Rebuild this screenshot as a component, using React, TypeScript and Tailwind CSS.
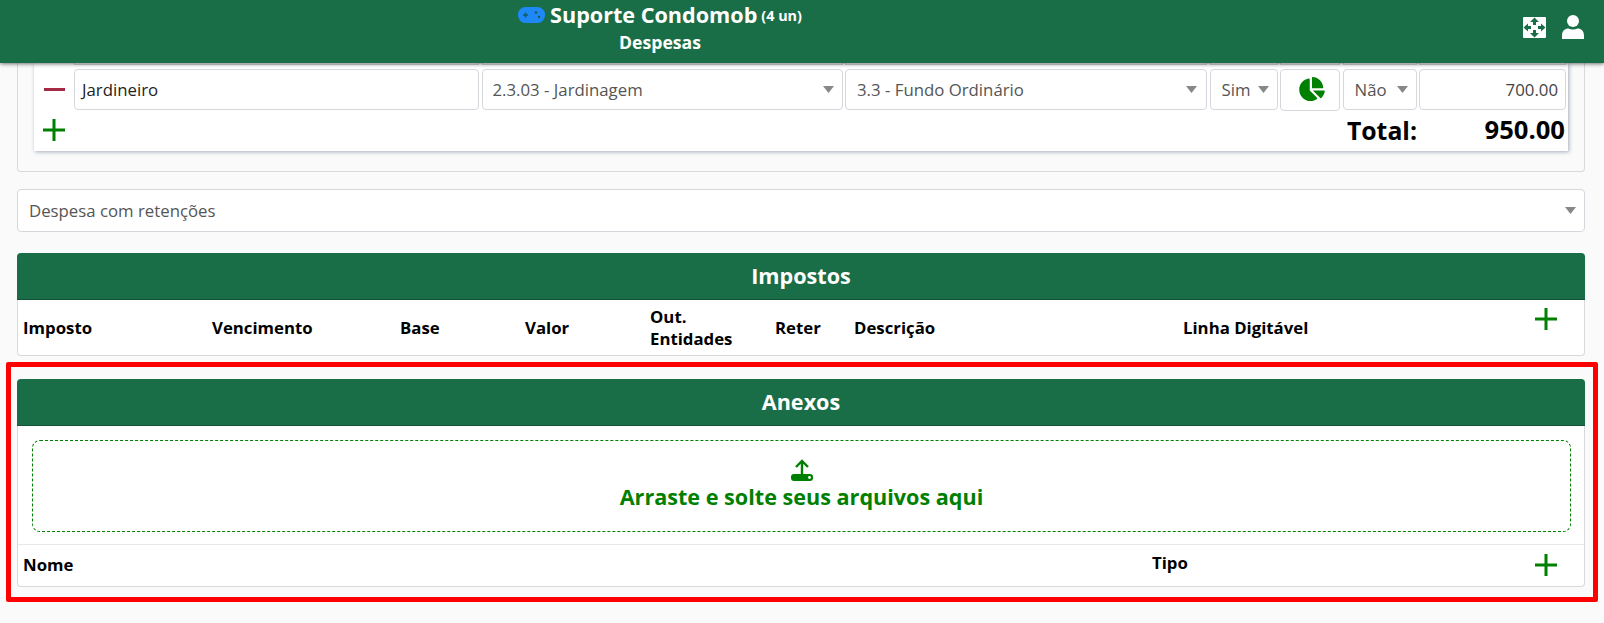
import { FaChartPie } from "react-icons/fa";

const rowGrid = "grid grid-cols-[405px_361px_362px_68px_60px_74px_147px] gap-x-[2.5px]";

function Caret({ className = "" }: { className?: string }) {
    return (
        <svg viewBox="0 0 11 7" className={`h-[7px] w-[11px] shrink-0 fill-[#888888] ${className}`}>
            <path d="M0 0h11L5.5 7z" />
        </svg>
    );
}

function Plus({ className = "" }: { className?: string }) {
    return (
        <svg viewBox="0 0 22 22" className={`h-[22px] w-[22px] ${className}`}>
            <path d="M0 11h22M11 0v22" stroke="#008000" strokeWidth="3" fill="none" />
        </svg>
    );
}

function Select({ label, className = "" }: { label: string; className?: string }) {
    return (
        <div className={`flex h-[41px] items-center justify-between rounded border border-[#d5d7dc] bg-white text-[#555] ${className}`}>
            <span>{label}</span>
            <Caret />
        </div>
    );
}

function SectionTitle({ title }: { title: string }) {
    return (
        <div className="-mx-px flex h-[47px] items-center justify-center rounded-t border-b border-[#125236] bg-[#1a6e47] pt-[1px] text-[21.6px] font-bold text-white">
            {title}
        </div>
    );
}

function Gamepad() {
    return (
        <svg viewBox="0 0 27 16" className="mr-[5px] h-[16px] w-[27px]">
            <rect width="27" height="16" rx="7.5" fill="#1e88f7" />
            <path d="M7.5 5.5v5M5 8h5" stroke="#1a5c5a" strokeWidth="1.6" />
            <circle cx="18" cy="5.5" r="1.3" fill="#1a5c5a" />
            <circle cx="21" cy="10" r="1.3" fill="#1a5c5a" />
        </svg>
    );
}

function ExpandIcon() {
    return (
        <svg viewBox="0 0 23 21" className="h-[21px] w-[23px]">
            <rect width="23" height="21" rx="1" fill="#fff" />
            <path d="M11.5 0.500l4.500 4.500h-3v3h-3V5h-3zM11.5 20.500l4.500-4.500h-3v-3h-3v3h-3zM0.500 10.500L5 6.500v2.500h3v3H5v2.500zM22.500 10.500L18 6.500v2.500h-3v3h3v2.500z" fill="#1a6e47" />
        </svg>
    );
}

function UserIcon() {
    return (
        <svg viewBox="0 0 22 24" className="h-[24px] w-[22px] fill-white">
            <circle cx="11" cy="6" r="6" />
            <path d="M0 24v-3.5C0 16 3 13.5 6.5 13.5c1.3.7 2.8 1 4.500 1s3.200-.3 4.500-1C19 13.500 22 16 22 20.500V24z" />
        </svg>
    );
}

function UploadIcon() {
    return (
        <svg viewBox="0 0 22 22" className="h-[22px] w-[22px]">
            <path d="M11 15V2M5 8l6-6 6 6" stroke="#008000" strokeWidth="2.4" fill="none" />
            <rect x="0" y="15" width="22" height="7" rx="3" fill="#008000" />
            <circle cx="18.500" cy="18.500" r="1.400" fill="#fff" />
        </svg>
    );
}

export default function App() {
    return (
        <div className="relative h-[623px] overflow-hidden bg-[#fafafa] font-['Open_Sans',sans-serif] text-[16.8px] text-black">
            <header className="relative z-10 flex h-[63px] bg-[#1a6e47] text-white shadow-[0_1px_4px_rgba(0,0,0,0.55)]">
                <div className="flex w-[1320px] flex-col items-center pt-[1px]">
                    <div className="flex h-[28px] items-center">
                        <Gamepad />
                        <span className="text-[21.6px] font-bold">Suporte Condomob</span>
                        <span className="ml-[4px] mt-[2px] text-[14.4px] font-bold">(4 un)</span>
                    </div>
                    <div className="text-[17.6px] font-bold">Despesas</div>
                </div>
                <div className="flex flex-1 items-center pb-[9px] pl-[203px]">
                    <ExpandIcon />
                    <span className="ml-[16px]"><UserIcon /></span>
                </div>
            </header>

            <main className="ml-[17px] w-[1568px]">
                <div className="h-[109px] rounded-b border border-t-0 border-[#d8d9dd]">
                    <div className="ml-[16px] h-[88px] w-[1534px] bg-white shadow-[1px_1px_4px_rgba(60,80,110,0.45)]">
                        <div className={`${rowGrid} h-[2px] pl-[40px]`}>
                            <div className="border-x border-b border-[#d5d7dc]" />
                            <div className="border-x border-b border-[#d5d7dc]" />
                            <div className="border-x border-b border-[#d5d7dc]" />
                            <div className="border-x border-b border-[#d5d7dc]" />
                            <div className="border-x border-b border-[#d5d7dc]" />
                            <div className="border-x border-b border-[#d5d7dc]" />
                            <div className="border-x border-b border-[#d5d7dc]" />
                        </div>
                        <div className={`${rowGrid} mt-[4px] pl-[40px]`}>
                            <div className="relative flex h-[41px] items-center rounded border border-[#d5d7dc] bg-white pl-[7px] text-[#222]">
                                <span className="absolute -left-[31px] top-[18px] h-[3px] w-[21px] bg-[#a52a45]" />
                                Jardineiro
                            </div>
                            <Select label="2.3.03 - Jardinagem" className="pl-[10px] pr-[8px]" />
                            <Select label="3.3 - Fundo Ordinário" className="pl-[11px] pr-[9px]" />
                            <Select label="Sim" className="pl-[11px] pr-[8px]" />
                            <button type="button" className="flex h-[42px] items-center justify-center rounded border border-[#d5d7dc] bg-white pb-[2px] pl-[3px]">
                                <FaChartPie className="h-[24px] w-[26px] text-[#008000]" />
                            </button>
                            <Select label="Não" className="pl-[11px] pr-[8px]" />
                            <div className="flex h-[41px] items-center justify-end rounded border border-[#d5d7dc] bg-white pr-[7px] text-[#444]">
                                700.00
                            </div>
                        </div>
                        <div className="flex items-center pl-[9px] pr-[3px] pt-[8px]">
                            <Plus />
                            <span className="ml-auto text-[24.8px] font-bold leading-[22px]">Total:</span>
                            <span className="ml-[66px] w-[82px] text-right text-[25.6px] font-bold leading-[22px]">950.00</span>
                        </div>
                    </div>
                </div>

                <Select label="Despesa com retenções" className="mt-[17px] h-[43px] pl-[11px] pr-[8px]" />

                <section className="mt-[21px] h-[103px] rounded border border-t-0 border-[#d8d9dd] bg-white">
                    <SectionTitle title="Impostos" />
                    <div className="relative flex h-[56px] items-center pl-[5px] font-bold">
                        <span className="w-[189px]">Imposto</span>
                        <span className="w-[188px]">Vencimento</span>
                        <span className="w-[125px]">Base</span>
                        <span className="w-[125px]">Valor</span>
                        <span className="w-[125px] leading-[22px]">Out.<br />Entidades</span>
                        <span className="w-[79px]">Reter</span>
                        <span className="w-[329px]">Descrição</span>
                        <span>Linha Digitável</span>
                        <Plus className="absolute right-[27px] top-[8px]" />
                    </div>
                </section>

                <section className="relative mt-[23px] h-[208px] rounded border border-t-0 border-[#d8d9dd] bg-white">
                    <div className="pointer-events-none absolute -left-[12px] -top-[17px] h-[240px] w-[1592px] rounded-[2px] border-[5px] border-[#ff0000]" />
                    <SectionTitle title="Anexos" />
                    <div className="ml-[14px] mr-[13px] mt-[14px] flex h-[92px] flex-col items-center rounded-lg border border-dashed border-[#008000] pt-[18px]">
                        <UploadIcon />
                        <div className="mt-[2px] text-[21.6px] font-bold leading-[28px] text-[#008000]">Arraste e solte seus arquivos aqui</div>
                    </div>
                    <div className="relative mt-[12px] flex h-[43px] items-center border-t border-[#e6e8ec] pl-[5px] pb-[2px] font-bold">
                        <span className="w-[1129px]">Nome</span>
                        <span className="-mt-[5px]">Tipo</span>
                        <Plus className="absolute right-[27px] top-[9px]" />
                    </div>
                </section>
            </main>
        </div>
    );
}
